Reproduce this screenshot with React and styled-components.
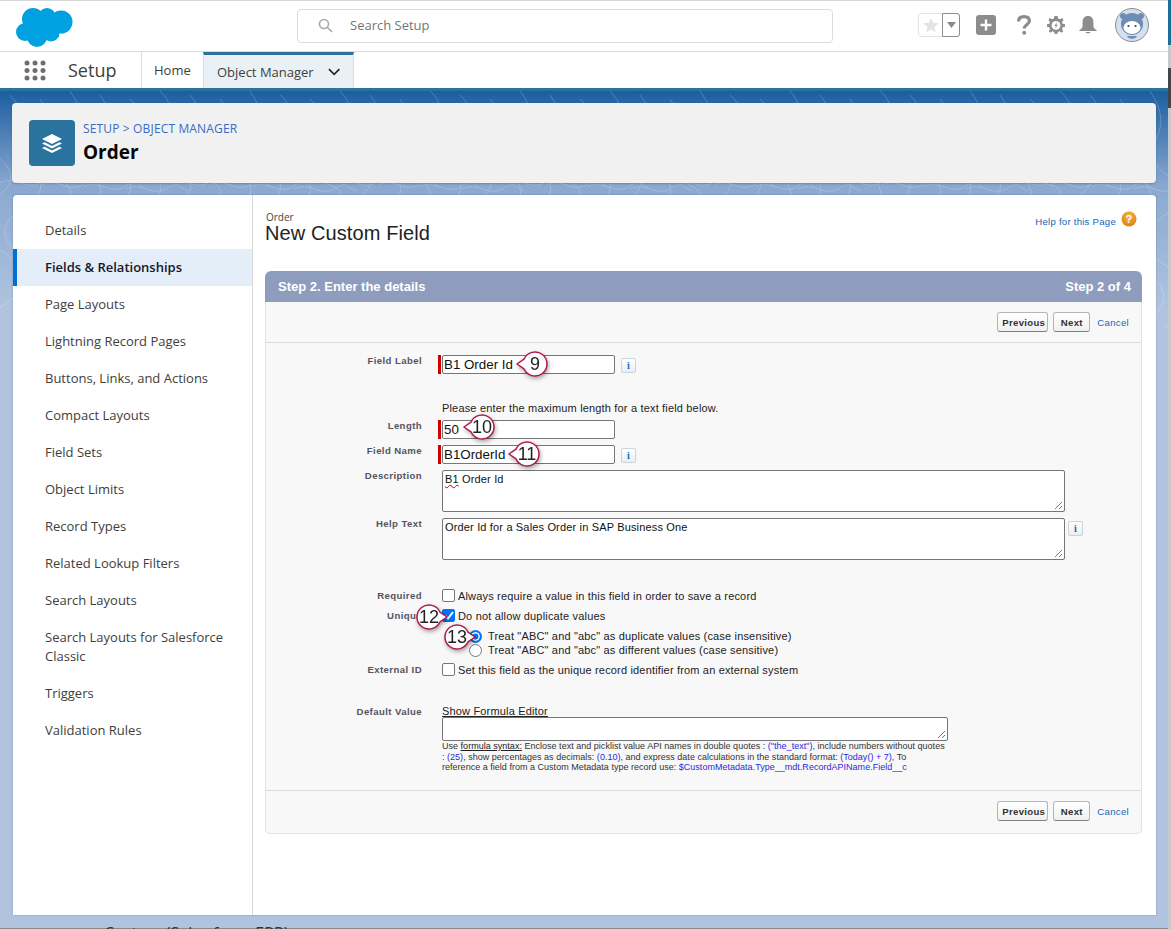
import React from "react";
import styled, { createGlobalStyle } from "styled-components";

const Global = createGlobalStyle`
  html, body { margin: 0; padding: 0; height: 929px; overflow: hidden; background: #fff; }
  * { box-sizing: border-box; }
  body { font-family: "Liberation Sans", Arial, sans-serif; }
`;

const Shell = styled.div`
  width: 1171px; height: 929px; display: flex; overflow: hidden;
`;
const Page = styled.div`
  width: 1168px; height: 929px; display: flex; flex-direction: column; border-top: 1px solid #d8d8d8;
`;
const Rail = styled.div`
  width: 3px; height: 929px; display: flex; flex-direction: column; background: #c8c8c8;
`;
const RailPart = styled.div`
  height: ${p => p.$h}px; background: ${p => p.$c};
`;

const TopBar = styled.header`
  height: 51px; flex: none; display: flex; align-items: flex-start; position: relative; background: #fff;
  border-bottom: 1px solid #dcdcdc;
`;
const LogoBox = styled.div`
  width: 297px; padding: 4px 0 0 15px;
`;
const SearchBox = styled.div`
  width: 536px; height: 34px; margin-top: 8px; border: 1px solid #dcdcdc; border-radius: 4px;
  display: flex; align-items: center; padding: 0 0 2px 20px; gap: 17px;
  font: 13px "Open Sans", sans-serif; color: #757575;
`;
const Actions = styled.div`
  display: flex; align-items: center; margin-left: 85px; height: 50px; padding-bottom: 3px;
`;
const StarGroup = styled.div`
  display: flex; width: 42px; height: 24px; border-radius: 3px; border: 1px solid #e4e4e4; margin-right: 16px;
`;
const StarCell = styled.div`
  flex: 1; display: flex; align-items: center; justify-content: center;
`;
const CaretCell = styled.div`
  width: 18px; margin: -1px -1px -1px 0; border: 1px solid #8f8f8f; border-radius: 0 3px 3px 0;
  display: flex; align-items: center; justify-content: center;
`;
const ActionIcon = styled.div`
  display: flex; align-items: center; justify-content: center; width: ${p => p.$w}px; margin-right: ${p => p.$m}px;
`;

const NavBar = styled.nav`
  height: 36px; flex: none; display: flex; background: #fff;
`;
const AppLauncher = styled.div`
  width: 68px; padding-left: 24px; display: flex; align-items: center;
`;
const AppName = styled.div`
  width: 73px; font: 18px/36px "Open Sans", sans-serif; color: #3e3e3c;
`;
const Tab = styled.div`
  height: 36px; display: flex; align-items: center; gap: 14px; font: 13px "Open Sans", sans-serif; color: #3e3e3c; white-space: nowrap;
  border-left: 1px solid #d8dde6; padding: ${p => p.$active ? "0 13px" : "0 12px"};
  width: ${p => p.$w}px; flex: none;
  ${p => p.$active && `background: #eaf1f6; border-top: 3px solid #2a739e; border-right: 1px solid #d8dde6;`}
`;

const Stage = styled.main`
  flex: 1; position: relative; overflow: hidden; border-top: 3px solid #2a739e;
  background: linear-gradient(180deg, #1b5e9f 0, #8aa8d0 95px, #b0c4df 220px, #b0c4df 100%);
  padding: 12px 12px 0; display: flex; flex-direction: column; gap: 12px;
`;
const Contours = styled.svg`
  position: absolute; left: 0; top: 0; width: 1168px; height: 260px; opacity: .2;
`;
const TitleCard = styled.section`
  position: relative; height: 80px; flex: none; background: #f1f1f1; border-radius: 4px;
  box-shadow: 0 1px 2px rgba(0,0,0,.2); display: flex; align-items: center; padding-left: 17px; gap: 8px;
`;
const ObjectTile = styled.div`
  width: 46px; height: 46px; border-radius: 4px; background: #2a739e; display: flex; align-items: center; justify-content: center;
`;
const Crumb = styled.div`
  font: 12px/16px "Open Sans", sans-serif; color: #3a6cc4; letter-spacing: .15px; margin: 0 0 2px;
`;
const ObjectName = styled.div`
  font: 700 19px/26px "Open Sans", sans-serif; color: #080707;
`;
const MainCard = styled.section`
  position: relative; height: 720px; flex: none; margin-left: 1px; background: #fff; display: flex;
  border-radius: 4px 4px 0 0; box-shadow: 0 0 2px rgba(0,0,0,.25);
`;
const Side = styled.aside`
  width: 240px; flex: none; padding-top: 17px; border-right: 1px solid #d8d8d8;
`;
const SideItem = styled.div`
  padding: ${p => p.$two ? "9px 20px 9px 32px" : "0 10px 0 32px"};
  ${p => !p.$two && "height: 37px; display: flex; align-items: center;"}
  font: ${p => p.$active ? 600 : 400} 13px/19px "Open Sans", sans-serif;
  color: #3e3e3c;
  ${p => p.$active && "background: #e4eef8; box-shadow: inset 4px 0 0 #0070d2; color: #16162a;"}
`;
const Content = styled.div`
  flex: 1; padding: 17px 14px 0 12px; min-width: 0;
`;
const PageHead = styled.div`
  height: 59px; display: flex; justify-content: space-between; align-items: flex-start;
`;
const Eyebrow = styled.div`
  font: 10px/10px "Open Sans", sans-serif; color: #444; margin-left: 1px;
`;
const PageTitle = styled.h1`
  margin: -2px 0 0; font: 400 20px/26px "Liberation Sans", sans-serif; color: #222; letter-spacing: .1px;
`;
const HelpLink = styled.div`
  display: flex; align-items: flex-start; gap: 5px; font: 9.6px/12px "Liberation Sans", sans-serif; color: #1468b6; margin-top: -1px; margin-right: 5px; letter-spacing: .25px;
`;
const HelpText = styled.span`
  padding-top: 5px;
`;
const Panel = styled.div`
  border: 1px solid #e0e3e5; border-top: none; border-radius: 0 0 5px 5px; background: #f8f8f8; height: 532px; position: relative;
  display: flex; flex-direction: column;
`;
const StepBar = styled.div`
  height: 31px; background: #8e9dbe; border-radius: 6px 6px 0 0; color: #fff; display: flex; align-items: center;
  justify-content: space-between; padding: 0 11px 0 13px; font: 700 13px "Liberation Sans", sans-serif;
`;
const ButtonRow = styled.div`
  height: ${p => p.$h}px; flex: none; display: flex; align-items: center; justify-content: flex-end; gap: 5px; padding-right: 12px;
  ${p => p.$top ? "border-top: 1px solid #dbdbdb; padding-bottom: 2px;" : "border-bottom: 1px solid #dbdbdb;"}
`;
const Btn = styled.button`
  height: 20px; padding: 0 4px; font: 700 9.6px "Liberation Sans", sans-serif; letter-spacing: .3px; color: #333; background: linear-gradient(#fff, #f0f0f0);
  border: 1px solid #b5b5b5; border-bottom-color: #7f7f7f; border-radius: 3px; width: ${p => p.$w}px;
`;
const CancelLink = styled.a`
  font: 9.6px "Liberation Sans", sans-serif; color: #1468b6; margin-left: 2px; letter-spacing: .3px;
`;
const Form = styled.div`
  flex: 1; position: relative; padding-top: 12px;
`;
const Row = styled.div`
  display: grid; grid-template-columns: 156px 1fr; column-gap: 20px; margin-top: ${p => p.$mt || 0}px;
`;
const Label = styled.div`
  text-align: right; font: 700 9.6px/12px "Liberation Sans", sans-serif; color: #55555f; padding-top: ${p => p.$pt ?? 0}px; letter-spacing: .4px;
`;
const Value = styled.div`
  display: flex; align-items: ${p => p.$top ? "flex-start" : "center"}; gap: ${p => p.$gap ?? 6}px; min-width: 0; position: relative;
`;
const Required = styled.div`
  position: absolute; left: -4px; top: 0; width: 3px; height: 19px; background: #c00;
`;
const TextBox = styled.div`
  width: ${p => p.$w}px; height: ${p => p.$h}px; border: 1px solid #767676; border-radius: 2px; background: #fff;
  font: ${p => p.$small ? "11px/13px" : "13.33px/17px"} "Liberation Sans", sans-serif; letter-spacing: ${p => p.$small ? ".16px" : "0"}; color: #111;
  padding: ${p => p.$small ? "2px" : "0 1px"}; position: relative; flex: none;
`;
const Squiggly = styled.span`
  text-decoration: underline wavy #c00 1px;
`;
const Grip = styled.svg`
  position: absolute; right: 1px; bottom: 1px;
`;
const InfoBtn = styled.div`
  width: 15px; height: 15px; flex: none; border: 1px solid #c9d4de; border-radius: 2px; background: linear-gradient(#fff, #e8eef4);
  font: 700 10px/13px "Liberation Serif", serif; text-align: center; color: #1468b6;
  margin: ${p => p.$mt ?? 1}px 0 0 0;
`;
const Note = styled.div`
  font: 11px/12px "Liberation Sans", sans-serif; color: #222; letter-spacing: .17px;
`;
const Check = styled.span`
  width: 13px; height: 13px; flex: none; border: 1px solid #767676; border-radius: 2px; background: #fff; display: inline-flex; align-items: center; justify-content: center;
  ${p => p.$on && "background: #0075ff; border-color: #0075ff;"}
`;
const Radio = styled.span`
  width: 13px; height: 13px; flex: none; border: 1px solid #767676; border-radius: 50%; background: #fff; display: inline-block;
  ${p => p.$on && "border: 2px solid #0075ff; box-shadow: inset 0 0 0 1.5px #fff; background: #0075ff;"}
`;
const RadioRow = styled.div`
  display: flex; align-items: center; gap: 6px; height: 14px; padding-left: 27px;
`;
const FormulaLink = styled.div`
  font: 11px/12px "Liberation Sans", sans-serif; color: #222; text-decoration: underline; letter-spacing: .17px;
  margin-top: 1px;
`;
const Hint = styled.div`
  width: 512px; font: 9px/10.5px "Liberation Sans", sans-serif; letter-spacing: .02px; color: #333;
  & u { color: #222; }
  & b { font-weight: 400; color: #2a2ae0; }
`;
const Column = styled.div`
  display: flex; flex-direction: column;
`;
const Bubble = styled.div`
  position: absolute; left: ${p => p.$x}px; top: ${p => p.$y}px; width: 44px; height: 30px; filter: drop-shadow(1px 2px 2px rgba(0,0,0,.35));
`;
const BubbleNum = styled.span`
  position: absolute; left: ${p => p.$flip ? 5 : 13}px; top: 3px; width: 26px; text-align: center; font: 18px/24px "Liberation Sans", sans-serif; color: #222;
`;
const BubbleArt = styled.svg`
  position: absolute; left: 0; top: 0; ${p => p.$flip && "transform: scaleX(-1);"}
`;
const Clipped = styled.div`
  position: absolute; left: 104px; top: 834px; font: 16px/16px "Open Sans", sans-serif; color: #333; white-space: nowrap;
`;
const BottomLine = styled.div`
  position: absolute; left: 0; right: 0; bottom: 0; height: 1px; background: #8a8a8a;
`;

const Callout = ({ x, y, n, flip }) => (
  <Bubble $x={x} $y={y}>
    <BubbleArt $flip={flip} width="44" height="30" viewBox="0 0 44 30">
      <path d="M8 15 L15 10.2 A12 12 0 1 1 15 19.8 Z" fill="#fff" stroke="#b0194c" strokeWidth="1.5" strokeLinejoin="round" />
    </BubbleArt>
    <BubbleNum $flip={flip}>{n}</BubbleNum>
  </Bubble>
);

const Logo = () => (
  <svg width="60" height="42" viewBox="0 0 60 42" fill="#00a1e0">
    <circle cx="18" cy="14" r="11" />
    <circle cx="32" cy="12" r="9" />
    <circle cx="46" cy="17" r="11.5" />
    <circle cx="10" cy="27" r="9" />
    <circle cx="22" cy="32" r="10" />
    <circle cx="36" cy="28" r="8.5" />
    <rect x="14" y="14" width="30" height="18" />
  </svg>
);

const items = ["Details", "Fields & Relationships", "Page Layouts", "Lightning Record Pages", "Buttons, Links, and Actions", "Compact Layouts", "Field Sets", "Object Limits", "Record Types", "Related Lookup Filters", "Search Layouts", "Search Layouts for Salesforce Classic", "Triggers", "Validation Rules"];

const Buttons = ({ h, top }) => (
  <ButtonRow $h={h} $top={top}>
    <Btn $w={51}>Previous</Btn>
    <Btn $w={37}>Next</Btn>
    <CancelLink>Cancel</CancelLink>
  </ButtonRow>
);

const ResizeGrip = () => (
  <Grip width="9" height="9" viewBox="0 0 9 9" stroke="#777"><path d="M1 8 L8 1 M5 8 L8 5" /></Grip>
);

export default function App() {
  return (
    <Shell>
      <Global />
      <Page>
        <TopBar>
          <LogoBox><Logo /></LogoBox>
          <SearchBox>
            <svg width="15" height="15" viewBox="0 0 15 15" fill="none" stroke="#a8a8a8" strokeWidth="1.6"><circle cx="6" cy="6" r="4.5" /><path d="M9.5 9.5 L14 14" /></svg>
            Search Setup
          </SearchBox>
          <Actions>
            <StarGroup>
              <StarCell>
                <svg width="16" height="16" viewBox="0 0 16 16" fill="#e3e3e3"><path d="M8 0.8 L10.2 5.8 L15.6 6.3 L11.5 9.9 L12.8 15.2 L8 12.4 L3.2 15.2 L4.5 9.9 L0.4 6.3 L5.8 5.8 Z" /></svg>
              </StarCell>
              <CaretCell>
                <svg width="9" height="6" viewBox="0 0 9 6" fill="#8a8a8a"><path d="M0 0 H9 L4.5 6 Z" /></svg>
              </CaretCell>
            </StarGroup>
            <ActionIcon $w={20} $m={21}>
              <svg width="20" height="20" viewBox="0 0 20 20"><rect width="20" height="20" rx="3" fill="#8c8c8c" /><path d="M10 4.5 V15.5 M4.5 10 H15.5" stroke="#fff" strokeWidth="2.4" /></svg>
            </ActionIcon>
            <ActionIcon $w={14} $m={16}>
              <svg width="14" height="20" viewBox="0 0 14 20" fill="none"><path d="M1.6 6.4 C1.6 3 4 1.6 7 1.6 C10.2 1.6 12.4 3.2 12.4 6 C12.4 9.4 7.2 9.6 7.2 13.6" stroke="#8c8c8c" strokeWidth="3.2" /><circle cx="7.2" cy="17.8" r="2" fill="#8c8c8c" /></svg>
            </ActionIcon>
            <ActionIcon $w={18} $m={14}>
              <svg width="18" height="18" viewBox="0 0 18 18"><path d="M7.4 0 H10.6 L11.1 2.5 L13 3.3 L15.2 1.9 L16.5 4 L15 5.9 L15.7 7.8 L18 8.2 V10.8 L15.7 11.2 L15 13.1 L16.3 15.2 L14.4 16.8 L12.6 15.2 L10.8 16 L10.3 18 H7.7 L7.2 16 L5.4 15.2 L3.6 16.8 L1.7 15.2 L3 13.1 L2.3 11.2 L0 10.8 V8.2 L2.3 7.8 L3 5.9 L1.5 4 L2.8 1.9 L5 3.3 L6.9 2.5 Z" fill="#8c8c8c" /><circle cx="9" cy="9.4" r="4.4" fill="#fff" /><path d="M10 6 L7.4 10 H9 L8 12.8 L10.8 8.8 H9.2 Z" fill="#8c8c8c" /></svg>
            </ActionIcon>
            <ActionIcon $w={18} $m={18}>
              <svg width="18" height="18" viewBox="0 0 18 18" fill="#8c8c8c"><path d="M9 0 C12.5 0 14.4 2.6 14.4 6 V10 C14.4 12 15.6 12.8 17.6 14 V15 H0.4 V14 C2.4 12.8 3.6 12 3.6 10 V6 C3.6 2.6 5.5 0 9 0 Z" /><path d="M6.4 16 H11.6 A2.7 2 0 0 1 6.4 16 Z" /></svg>
            </ActionIcon>
            <svg width="34" height="34" viewBox="0 0 34 34">
              <circle cx="17" cy="17" r="16.5" fill="#d5e0ee" stroke="#8d8d8d" />
              <circle cx="8" cy="8" r="3" fill="#6f8cb3" />
              <circle cx="26" cy="8" r="3" fill="#6f8cb3" />
              <circle cx="17" cy="16" r="11" fill="#6f8cb3" />
              <ellipse cx="17" cy="19.5" rx="8.5" ry="6.5" fill="#fff" />
              <circle cx="13.5" cy="18" r="1.1" fill="#33476a" />
              <circle cx="20.5" cy="18" r="1.1" fill="#33476a" />
              <path d="M12 28 C13 31.5 21 31.5 22 28 Z" fill="#6f8cb3" />
            </svg>
          </Actions>
        </TopBar>
        <NavBar>
          <AppLauncher>
            <svg width="22" height="21" viewBox="0 0 22 21" fill="#706e6b">
              {[3, 11, 19].flatMap(x => [3, 10.5, 18].map(y => <circle key={`${x}-${y}`} cx={x} cy={y} r="2.5" />))}
            </svg>
          </AppLauncher>
          <AppName>Setup</AppName>
          <Tab $w={62}>Home</Tab>
          <Tab $active $w={151}>
            Object Manager
            <svg width="13" height="8" viewBox="0 0 13 8" fill="none" stroke="#222" strokeWidth="1.7"><path d="M1 1 L6.5 6.5 L12 1" /></svg>
          </Tab>
        </NavBar>
        <Stage>
          <Contours viewBox="0 0 1168 260" fill="none" stroke="#fff" strokeWidth="1">
            {Array.from({ length: 40 }).map((_, i) => (
              <path key={i} d={`M${i * 30 - 20} ${(i % 3) * 4} q 18 ${14 + (i % 5) * 3} 6 ${30 + (i % 4) * 6} t 14 38 t -10 42 t 12 50 t -8 60`} />
            ))}
            {Array.from({ length: 30 }).map((_, i) => (
              <path key={`h${i}`} d={`M${i * 42} ${92 + (i % 4) * 2} c 14 -8 26 8 40 0 s 10 -4 22 2`} />
            ))}
          </Contours>
          <TitleCard>
            <ObjectTile>
              <svg width="20" height="19" viewBox="0 0 20 19" fill="#fff">
                <path d="M10 0 L20 5 L10 10 L0 5 Z" />
                <path d="M2.6 8.2 L10 12 L17.4 8.2 L20 9.5 L10 14.5 L0 9.5 Z" />
                <path d="M2.6 12.7 L10 16.5 L17.4 12.7 L20 14 L10 19 L0 14 Z" />
              </svg>
            </ObjectTile>
            <div>
              <Crumb>SETUP &gt; OBJECT MANAGER</Crumb>
              <ObjectName>Order</ObjectName>
            </div>
          </TitleCard>
          <MainCard>
            <Side>
              {items.map((t, i) => (
                <SideItem key={t} $active={i === 1} $two={t.length > 30}>{t}</SideItem>
              ))}
            </Side>
            <Content>
              <PageHead>
                <div>
                  <Eyebrow>Order</Eyebrow>
                  <PageTitle>New Custom Field</PageTitle>
                </div>
                <HelpLink>
                  <HelpText>Help for this Page</HelpText>
                  <svg width="16" height="16" viewBox="0 0 16 16">
                    <defs>
                      <radialGradient id="helpOrange" cx="50%" cy="30%" r="75%"><stop offset="0" stopColor="#f6b44a" /><stop offset="1" stopColor="#d97f06" /></radialGradient>
                    </defs>
                    <circle cx="8" cy="8" r="7.5" fill="url(#helpOrange)" />
                    <text x="8" y="12" textAnchor="middle" fontSize="11" fontWeight="700" fontFamily="Liberation Sans" fill="#fff">?</text>
                  </svg>
                </HelpLink>
              </PageHead>
              <StepBar><span>Step 2. Enter the details</span><span>Step 2 of 4</span></StepBar>
              <Panel>
                <Buttons h={41} />
                <Form>
                  <Row>
                    <Label>Field Label</Label>
                    <Value><Required /><TextBox $w={173} $h={19}>B1 Order Id</TextBox><InfoBtn>i</InfoBtn></Value>
                  </Row>
                  <Row $mt={28}>
                    <span />
                    <Note>Please enter the maximum length for a text field below.</Note>
                  </Row>
                  <Row $mt={6}>
                    <Label>Length</Label>
                    <Value><Required /><TextBox $w={173} $h={19}>50</TextBox></Value>
                  </Row>
                  <Row $mt={6}>
                    <Label>Field Name</Label>
                    <Value><Required /><TextBox $w={173} $h={19}>B1OrderId</TextBox><InfoBtn>i</InfoBtn></Value>
                  </Row>
                  <Row $mt={6}>
                    <Label>Description</Label>
                    <Value $top><TextBox $w={623} $h={42} $small><Squiggly>B1</Squiggly> Order Id<ResizeGrip /></TextBox></Value>
                  </Row>
                  <Row $mt={6}>
                    <Label>Help Text</Label>
                    <Value $top $gap={3}><TextBox $w={623} $h={42} $small>Order Id for a Sales Order in SAP Business One<ResizeGrip /></TextBox><InfoBtn $mt={3}>i</InfoBtn></Value>
                  </Row>
                  <Row $mt={29}>
                    <Label $pt={1}>Required</Label>
                    <Value $gap={3}><Check /><Note>Always require a value in this field in order to save a record</Note></Value>
                  </Row>
                  <Row $mt={7}>
                    <Label $pt={1}>Unique</Label>
                    <Value $gap={3}>
                      <Check $on><svg width="10" height="9" viewBox="0 0 10 9" fill="none" stroke="#fff" strokeWidth="2"><path d="M1 4.5 L4 7.5 L9 1" /></svg></Check>
                      <Note>Do not allow duplicate values</Note>
                    </Value>
                  </Row>
                  <Row $mt={7}>
                    <span />
                    <Column>
                      <RadioRow><Radio $on /><Note>Treat "ABC" and "abc" as duplicate values (case insensitive)</Note></RadioRow>
                      <RadioRow><Radio /><Note>Treat "ABC" and "abc" as different values (case sensitive)</Note></RadioRow>
                    </Column>
                  </Row>
                  <Row $mt={6}>
                    <Label $pt={1}>External ID</Label>
                    <Value $gap={3}><Check /><Note>Set this field as the unique record identifier from an external system</Note></Value>
                  </Row>
                  <Row $mt={28}>
                    <Label $pt={2}>Default Value</Label>
                    <Column>
                      <FormulaLink>Show Formula Editor</FormulaLink>
                      <TextBox $w={506} $h={24} $small><ResizeGrip /></TextBox>
                      <Hint>Use <u>formula syntax:</u> Enclose text and picklist value API names in double quotes : <b>("the_text")</b>, include numbers without quotes<br />: <b>(25)</b>, show percentages as decimals: <b>(0.10)</b>, and express date calculations in the standard format: <b>(Today() + 7)</b>, To<br />reference a field from a Custom Metadata type record use: <b>$CustomMetadata.Type__mdt.RecordAPIName.Field__c</b></Hint>
                    </Column>
                  </Row>
                  <Callout x={243} y={6} n="9" />
                  <Callout x={190} y={69} n="10" />
                  <Callout x={235} y={96} n="11" />
                  <Callout x={145} y={259} n="12" flip />
                  <Callout x={173} y={279} n="13" flip />
                </Form>
                <Buttons h={43} top />
              </Panel>
            </Content>
          </MainCard>
          <BottomLine />
          <Clipped>Custom (Sales force ERP)</Clipped>
        </Stage>
      </Page>
      <Rail>
        <RailPart $h={45} $c="#1a6f96" />
        <RailPart $h={23} $c="#c9c9c9" />
        <RailPart $h={40} $c="#454545" />
      </Rail>
    </Shell>
  );
}
